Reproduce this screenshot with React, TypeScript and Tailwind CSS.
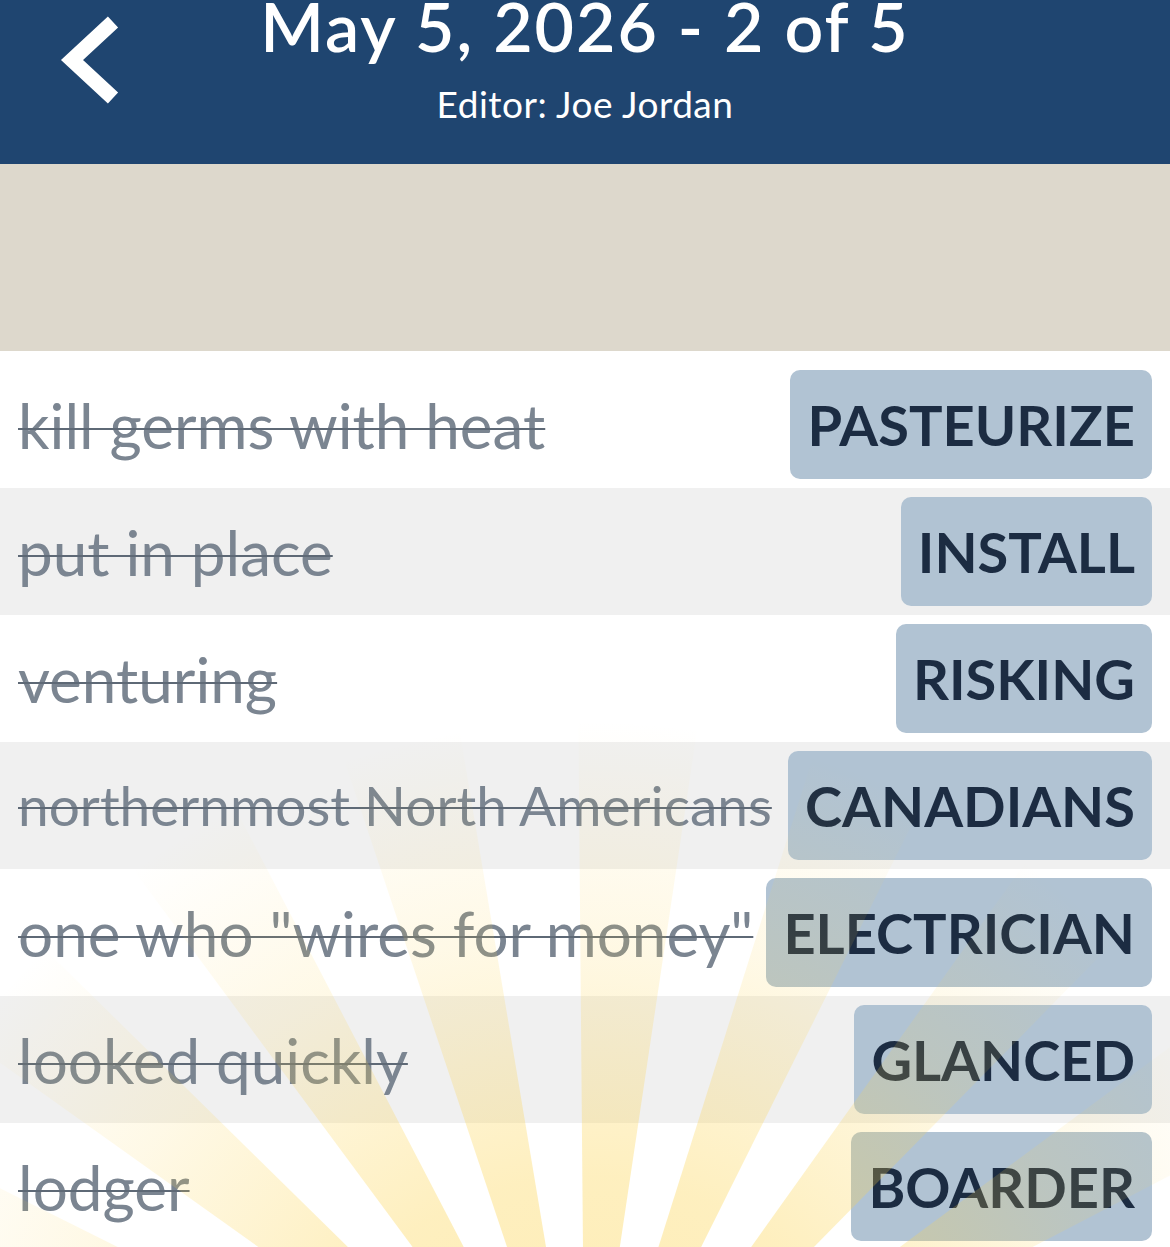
import React, { FC } from "react";

type Pair = { clue: string; answer: string; size?: string };

const pairs: Pair[] = [
    { clue: "kill germs with heat", answer: "PASTEURIZE" },
    { clue: "put in place", answer: "INSTALL" },
    { clue: "venturing", answer: "RISKING" },
    // long clue is shrunk to fit beside its answer
    { clue: "northernmost North Americans", answer: "CANADIANS", size: "text-[55px]" },
    { clue: 'one who "wires for money"', answer: "ELECTRICIAN" },
    { clue: "looked quickly", answer: "GLANCED" },
    { clue: "lodger", answer: "BOARDER" },
];

// sunburst rays over the bottom of the list
const Rays: FC = () => {
    const cx = 585;
    const cy = 1480;
    const len = 1400;
    const rays = [];
    for (let i = 0; i < 20; i++) {
        const a0 = ((i * 18 + 4 - 4.5) * Math.PI) / 180;
        const a1 = ((i * 18 + 4 + 4.5) * Math.PI) / 180;
        const p = `${cx},${cy} ${cx + len * Math.sin(a0)},${cy - len * Math.cos(a0)} ${cx + len * Math.sin(a1)},${cy - len * Math.cos(a1)}`;
        rays.push(<polygon key={i} points={p} fill="url(#glow)" />);
    }
    return (
        <svg width="1170" height="896" viewBox="0 351 1170 896" className="block">
            <defs>
                <radialGradient id="glow" cx={cx} cy={cy} r="760" gradientUnits="userSpaceOnUse">
                    <stop offset="0" stopColor="#fcd34d" stopOpacity="0.45" />
                    <stop offset="0.4" stopColor="#fcd34d" stopOpacity="0.36" />
                    <stop offset="0.72" stopColor="#fcd34d" stopOpacity="0.14" />
                    <stop offset="1" stopColor="#fcd34d" stopOpacity="0" />
                </radialGradient>
            </defs>
            {rays}
        </svg>
    );
};

const Row: FC<{ pair: Pair; shaded: boolean }> = ({ pair, shaded }) => (
    <div
        className={
            "h-[127px] flex items-center justify-between gap-[8px] pl-[18px] pr-[18px] " +
            (shaded ? "bg-[#f0f0f0]" : "bg-white")
        }
    >
        <span
            className={
                "leading-none text-[#7b8591] line-through decoration-[#5e6976] decoration-[2px] whitespace-nowrap " +
                (pair.size ?? "text-[62px]")
            }
        >
            {pair.clue}
        </span>
        <div className="h-[109px] flex items-center rounded-[10px] bg-[#b1c3d3] px-[17px] shrink-0">
            <span className="text-[56px] leading-none font-bold text-[#1c2c42] whitespace-nowrap">
                {pair.answer}
            </span>
        </div>
    </div>
);

const App: FC = () => {
    return (
        <div className="relative w-[1170px] h-[1247px] overflow-hidden bg-white font-['Lato',sans-serif]">
            <header className="h-[164px] bg-[#1f4570] grid grid-cols-[1fr_auto_1fr] text-white">
                <div className="pl-[57px] pt-[12px]">
                    <svg width="70" height="96" viewBox="0 0 70 96">
                        <polyline
                            points="56,10 15,48 56,86"
                            fill="none"
                            stroke="white"
                            strokeWidth="15"
                            strokeLinejoin="miter"
                        />
                    </svg>
                </div>
                <div className="flex flex-col items-center">
                    <h1 className="text-[68px] font-semibold leading-none tracking-[2px] -mt-[8px]">
                        May 5, 2026 - 2 of 5
                    </h1>
                    <p className="text-[37px] leading-none tracking-[0.5px] mt-[25px]">Editor: Joe Jordan</p>
                </div>
                <div />
            </header>

            <div className="h-[187px] bg-[#ddd8cc]" />

            <div className="pt-[10px] bg-white">
                {pairs.map((pair, i) => (
                    <Row key={pair.answer} pair={pair} shaded={i % 2 === 1} />
                ))}
            </div>

            <div className="absolute left-0 top-[351px] pointer-events-none">
                <Rays />
            </div>
        </div>
    );
};

export default App;
